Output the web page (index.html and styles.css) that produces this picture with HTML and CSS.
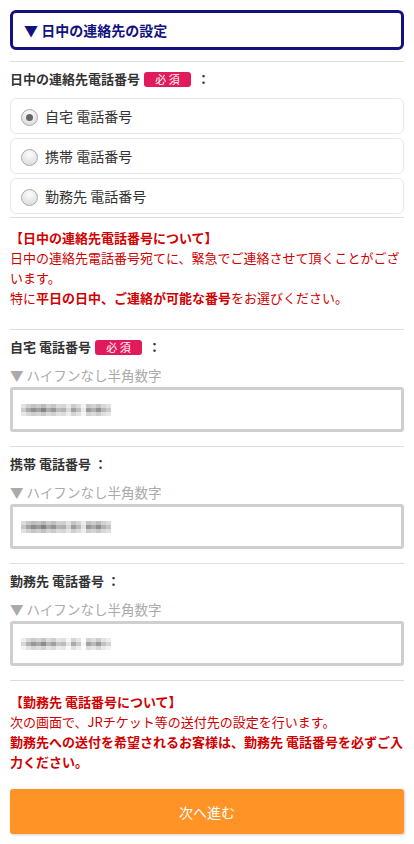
FILE: index.html
```html
<!doctype html>
<html lang="ja">
<head>
	<meta charset="utf-8">
	<title>日中の連絡先の設定</title>
	<link rel="stylesheet" href="styles.css">
</head>
<body>
	<div class="page">
		<div class="head">▼ 日中の連絡先の設定</div>

		<div class="sec">
			<div class="label">日中の連絡先電話番号<span class="must">必 須</span><span class="colon">：</span></div>
			<div class="radio on"><span class="dot"></span>自宅 電話番号</div>
			<div class="radio"><span class="dot"></span>携帯 電話番号</div>
			<div class="radio last"><span class="dot"></span>勤務先 電話番号</div>
		</div>

		<div class="sec note">
			<b>【日中の連絡先電話番号について】</b><br>
			日中の連絡先電話番号宛てに、緊急でご連絡させて頂くことがございます。<br>
			特に<b>平日の日中、ご連絡が可能な番号</b>をお選びください。
		</div>

		<div class="sec phone">
			<div class="label">自宅 電話番号<span class="must">必 須</span><span class="colon">：</span></div>
			<div class="hint">▼ ハイフンなし半角数字</div>
			<div class="input"><span class="mosaic m1"></span></div>
		</div>

		<div class="sec phone">
			<div class="label">携帯 電話番号 ：</div>
			<div class="hint">▼ ハイフンなし半角数字</div>
			<div class="input"><span class="mosaic m2"></span></div>
		</div>

		<div class="sec phone">
			<div class="label">勤務先 電話番号 ：</div>
			<div class="hint">▼ ハイフンなし半角数字</div>
			<div class="input"><span class="mosaic m3"></span></div>
		</div>

		<div class="sec note last-note">
			<b>【勤務先 電話番号について】</b><br>
			次の画面で、JRチケット等の送付先の設定を行います。<br>
			<b>勤務先への送付を希望されるお客様は、勤務先 電話番号を必ずご入力ください。</b>
		</div>

		<div class="next">次へ進む</div>
	</div>
</body>
</html>
```

FILE: styles.css
```css
body {
	margin: 0;
	background: #fff;
	font-family: "Noto Sans CJK JP", "Noto Sans", sans-serif;
	color: #333;
}

.page {
	padding: 10px;
}

.head {
	height: 40px;
	box-sizing: border-box;
	border: 3px solid #12127f;
	border-radius: 6px;
	display: flex;
	align-items: center;
	padding-left: 11px;
	color: #12127f;
	font-size: 14px;
	font-weight: bold;
}

.sec {
	border-top: 1px solid #ddd;
}

.head + .sec {
	margin-top: 11px;
}

.label {
	margin: 8px 0 10px;
	line-height: 18px;
	font-size: 13px;
	font-weight: bold;
	color: #333;
	display: flex;
	align-items: center;
}

.must {
	display: inline-block;
	background: #e11a5c;
	color: #fff;
	font-size: 11px;
	font-weight: normal;
	line-height: 15px;
	width: 47px;
	text-align: center;
	border-radius: 3px;
	margin-left: 4px;
}

.colon {
	margin-left: 6px;
}

.radio {
	height: 36px;
	box-sizing: border-box;
	border: 1px solid #e8e8e8;
	border-radius: 6px;
	margin-bottom: 4px;
	display: flex;
	align-items: center;
	padding-left: 10px;
	font-size: 14px;
	color: #333;
}

.radio.last {
	margin-bottom: 3px;
}

.dot {
	width: 17px;
	height: 17px;
	box-sizing: border-box;
	border-radius: 50%;
	border: 1px solid #aaa;
	background: radial-gradient(circle at 50% 30%, #fdfdfd, #d6d6d6);
	margin: 3px 7px 0 0;
	position: relative;
}

.radio.on .dot::after {
	content: "";
	position: absolute;
	left: 4px;
	top: 4px;
	width: 7px;
	height: 7px;
	border-radius: 50%;
	background: #666;
}

.note {
	padding: 10px 0 21px;
	color: #d10000;
	font-size: 13px;
	line-height: 20px;
}

.phone .label {
	margin: 8px 0 10px;
}

.hint {
	color: #aaa;
	font-size: 13.5px;
	line-height: 18px;
}

.input {
	margin: 3px 0 14px;
	height: 45px;
	box-sizing: border-box;
	border: 3px solid #cfcfcf;
	border-radius: 3px;
	display: flex;
	align-items: center;
	padding-left: 8px;
}

.mosaic {
	display: block;
	width: 90px;
	height: 12px;
	margin-top: 1px;
	background:
		linear-gradient(180deg, rgba(255,255,255,0.45) 0 4px, transparent 4px 8px, rgba(255,255,255,0.55) 8px),
		linear-gradient(90deg, #ccc 0 5px, #a8a8a8 5px 10px, #919191 10px 15px, #a0a0a0 15px 20px, #868686 20px 25px, #adadad 25px 30px, #989898 30px 35px, #bcbcbc 35px 40px, #b3b3b3 40px 45px, #d8d8d8 45px 50px, #a2a2a2 50px 55px, #c0c0c0 55px 60px, #eaeaea 60px 65px, #9c9c9c 65px 70px, #b0b0b0 70px 75px, #929292 75px 80px, #b8b8b8 80px 85px, #cacaca 85px 90px);
}

.m2 {
	filter: brightness(0.97);
}

.m3 {
	filter: brightness(1.05);
}

.last-note {
	padding: 11px 0 0;
}

.next {
	margin-top: 17px;
	height: 45px;
	background: #ff9326;
	border-radius: 3px;
	box-shadow: 1px 1px 3px rgba(0, 0, 0, 0.2);
	color: #fff;
	font-size: 14px;
	display: flex;
	align-items: center;
	justify-content: center;
}
```
